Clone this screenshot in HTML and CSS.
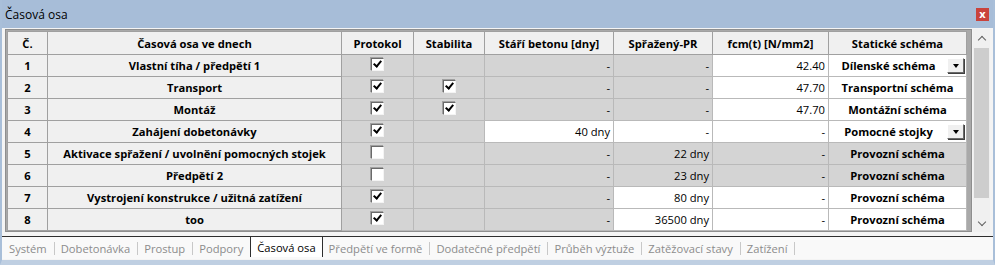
FILE: index.html
```html
<!DOCTYPE html>
<html lang="cs">
<head>
    <meta charset="UTF-8">
    <title>Časová osa</title>
    <link rel="stylesheet" href="styles.css">
</head>
<body>
    <div class="window">
        <div class="titlebar">
            <span class="title">Časová osa</span>
            <span class="close">x</span>
        </div>

        <div class="content">
            <div class="grid-wrap">
                <div class="grid">
                    <table>
                        <colgroup>
                            <col class="c-no">
                            <col class="c-name">
                            <col class="c-prot">
                            <col class="c-stab">
                            <col class="c-age">
                            <col class="c-pr">
                            <col class="c-fcm">
                            <col class="c-scheme">
                        </colgroup>
                        <thead>
                            <tr>
                                <th>Č.</th>
                                <th>Časová osa ve dnech</th>
                                <th>Protokol</th>
                                <th>Stabilita</th>
                                <th>Stáří betonu [dny]</th>
                                <th>Spřažený-PR</th>
                                <th>fcm(t) [N/mm2]</th>
                                <th>Statické schéma</th>
                            </tr>
                        </thead>
                        <tbody>
                            <tr>
                                <td class="head">1</td>
                                <td class="head">Vlastní tíha / předpětí 1</td>
                                <td class="ro chk"><span class="box on"></span></td>
                                <td class="ro"></td>
                                <td class="ro num">-</td>
                                <td class="ro num">-</td>
                                <td class="num">42.40</td>
                                <td class="scheme"><span class="combo"><span class="label">Dílenské schéma</span><span class="drop"></span></span></td>
                            </tr>
                            <tr>
                                <td class="head">2</td>
                                <td class="head">Transport</td>
                                <td class="ro chk"><span class="box on"></span></td>
                                <td class="ro chk"><span class="box on"></span></td>
                                <td class="ro num">-</td>
                                <td class="ro num">-</td>
                                <td class="num">47.70</td>
                                <td class="scheme">Transportní schéma</td>
                            </tr>
                            <tr>
                                <td class="head">3</td>
                                <td class="head">Montáž</td>
                                <td class="ro chk"><span class="box on"></span></td>
                                <td class="ro chk"><span class="box on"></span></td>
                                <td class="ro num">-</td>
                                <td class="ro num">-</td>
                                <td class="num">47.70</td>
                                <td class="scheme">Montážní schéma</td>
                            </tr>
                            <tr>
                                <td class="head">4</td>
                                <td class="head">Zahájení dobetonávky</td>
                                <td class="ro chk"><span class="box on"></span></td>
                                <td class="ro"></td>
                                <td class="num">40 dny</td>
                                <td class="num">-</td>
                                <td class="num">-</td>
                                <td class="scheme"><span class="combo"><span class="label">Pomocné stojky</span><span class="drop"></span></span></td>
                            </tr>
                            <tr>
                                <td class="head">5</td>
                                <td class="head">Aktivace spřažení / uvolnění pomocných stojek</td>
                                <td class="ro chk"><span class="box"></span></td>
                                <td class="ro"></td>
                                <td class="ro num">-</td>
                                <td class="ro num">22 dny</td>
                                <td class="ro num">-</td>
                                <td class="ro scheme">Provozní schéma</td>
                            </tr>
                            <tr>
                                <td class="head">6</td>
                                <td class="head">Předpětí 2</td>
                                <td class="ro chk"><span class="box"></span></td>
                                <td class="ro"></td>
                                <td class="ro num">-</td>
                                <td class="ro num">23 dny</td>
                                <td class="ro num">-</td>
                                <td class="ro scheme">Provozní schéma</td>
                            </tr>
                            <tr>
                                <td class="head">7</td>
                                <td class="head">Vystrojení konstrukce / užitná zatížení</td>
                                <td class="ro chk"><span class="box on"></span></td>
                                <td class="ro"></td>
                                <td class="ro num">-</td>
                                <td class="num">80 dny</td>
                                <td class="num">-</td>
                                <td class="scheme">Provozní schéma</td>
                            </tr>
                            <tr>
                                <td class="head">8</td>
                                <td class="head">too</td>
                                <td class="ro chk"><span class="box on"></span></td>
                                <td class="ro"></td>
                                <td class="ro num">-</td>
                                <td class="num">36500 dny</td>
                                <td class="num">-</td>
                                <td class="scheme">Provozní schéma</td>
                            </tr>
                        </tbody>
                    </table>
                </div>

                <div class="scrollbar">
                    <span class="arrow up"></span>
                    <div class="track"><div class="thumb"></div></div>
                    <span class="arrow down"></span>
                </div>
            </div>

            <!-- záložky dole -->
            <div class="tabs">
                <span class="tab">Systém</span>
                <span class="tab">Dobetonávka</span>
                <span class="tab">Prostup</span>
                <span class="tab">Podpory</span>
                <span class="tab active">Časová osa</span>
                <span class="tab">Předpětí ve formě</span>
                <span class="tab">Dodatečné předpětí</span>
                <span class="tab">Průběh výztuže</span>
                <span class="tab">Zatěžovací stavy</span>
                <span class="tab">Zatížení</span>
            </div>
        </div>
    </div>
</body>
</html>
```

FILE: styles.css
```css
body {
    margin: 0;
    font-family: "Open Sans", "Noto Sans", sans-serif;
    font-size: 11.2px;
    color: #000;
}

.window {
    width: 991px;
    height: 260px;
    border-left: 2px solid #a9bfd9;
    border-right: 2px solid #a9bfd9;
    border-bottom: 5px solid #bfcfe2;
    background-color: #f4f4f4;
}

.titlebar {
    height: 28px;
    display: flex;
    align-items: center;
    justify-content: space-between;
    background-color: #a7bdd8;
    padding: 0 3px;
}

.title {
    font-size: 12px;
}

.close {
    width: 13px;
    height: 13px;
    margin-right: 1px;
    background-color: #c9433c;
    color: white;
    font-size: 11px;
    font-weight: bold;
    line-height: 11px;
    text-align: center;
}

.content {
    padding-top: 1px;
}

.grid-wrap {
    display: flex;
    height: 203px;
    padding: 0 3px;
    gap: 1px;
}

.grid {
    flex: 1;
    border: 1px solid #8e8e8e;
    padding: 1px 0 0 1px;
    background-color: #a9a9a9;
    overflow: hidden;
}

table {
    border-collapse: collapse;
    table-layout: fixed;
    width: 959px;
}

.c-no { width: 40px; }
.c-name { width: 294px; }
.c-prot { width: 72px; }
.c-stab { width: 71px; }
.c-age { width: 129px; }
.c-pr { width: 99px; }
.c-fcm { width: 116px; }
.c-scheme { width: 138px; }

th {
    height: 22px;
    padding: 0;
    background-color: #f0f0f0;
    border: 1px solid #a0a0a0;
    font-weight: bold;
    text-align: center;
    white-space: nowrap;
}

td {
    height: 21px;
    padding: 0 3px;
    background-color: white;
    border: 1px solid #b9b9b9;
    white-space: nowrap;
}

td.head {
    background-color: #f0f0f0;
    border-color: #a0a0a0;
    font-weight: bold;
    text-align: center;
}

td.ro {
    background-color: #d4d4d4;
}

td.num {
    text-align: right;
}

td.chk {
    text-align: center;
    padding: 0;
}

td.scheme {
    font-weight: bold;
    text-align: center;
    padding: 0 1px;
}

.box {
    display: inline-block;
    vertical-align: middle;
    width: 11px;
    height: 11px;
    background-color: white;
    border: 1px solid;
    border-color: #6a6a6a #f4f4f4 #f4f4f4 #6a6a6a;
    box-shadow: -1px -1px 0 #a0a0a0;
    position: relative;
    top: -2px;
}

.box.on::after {
    content: "";
    position: absolute;
    left: 3px;
    top: 0;
    width: 3px;
    height: 6px;
    border-right: 2px solid #000;
    border-bottom: 2px solid #000;
    transform: rotate(40deg);
}

.combo {
    display: flex;
    align-items: center;
}

.combo .label {
    flex: 1;
    text-align: center;
}

.drop {
    width: 15px;
    height: 13px;
    margin-right: 1px;
    background-color: #f0f0f0;
    border: 1px solid;
    border-color: #fff #6a6a6a #6a6a6a #fff;
    box-shadow: 1px 1px 0 #404040;
    display: flex;
    align-items: center;
    justify-content: center;
}

.drop::after {
    content: "";
    border-left: 3px solid transparent;
    border-right: 3px solid transparent;
    border-top: 4px solid #000;
}

.scrollbar {
    width: 17px;
    display: flex;
    flex-direction: column;
    align-items: center;
    background-color: #f0f0f0;
}

.arrow {
    height: 17px;
    width: 17px;
    display: flex;
    align-items: center;
    justify-content: center;
}

.arrow::after {
    content: "";
    width: 5px;
    height: 5px;
    border-left: 1.5px solid #606060;
    border-top: 1.5px solid #606060;
}

.arrow.up::after {
    transform: rotate(45deg);
    margin-top: 4px;
}

.arrow.down::after {
    transform: rotate(-135deg);
    margin-top: -4px;
}

.track {
    flex: 1;
    width: 100%;
    padding-top: 2px;
}

.thumb {
    margin: 0 1px;
    height: 150px;
    background-color: #cdcdcd;
}

.tabs {
    margin-top: 4px;
    height: 22px;
    border-top: 1px solid #2e2e2e;
    display: flex;
    align-items: stretch;
    padding-left: 1px;
    background-color: #f9f9f9;
}

.tab {
    display: flex;
    align-items: center;
    padding: 0 7px 1px 6px;
    color: #8c8c8c;
    font-size: 11.2px;
    border-right: 1px solid #c8c8c8;
    margin: 5px 0 4px 0;
}

.tab.active {
    color: #000;
    background-color: #fff;
    border-left: 1px solid #2e2e2e;
    border-right: 1px solid #2e2e2e;
    margin: 0 0 2px 0;
    padding: 0 6px;
}

.tab:nth-child(4) {
    border-right: none;
}
```
